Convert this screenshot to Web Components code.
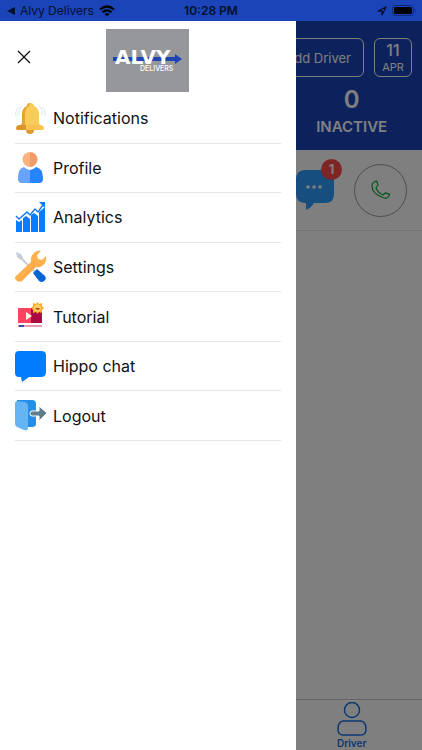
<!DOCTYPE html>
<html lang="en">
<head>
<meta charset="utf-8">
<meta name="viewport" content="width=device-width, initial-scale=1">
<title>Alvy Delivers</title>
<style>
  html, body {
    height: 100%;
    margin: 0;
  }

  body {
    background: #fff;
    color: #111;
    font-family: Inter, "Liberation Sans", sans-serif;
  }
</style>
</head>
<body>
<alvy-app></alvy-app>
<script>
const icons = {
  bell: `
    <path d="M4 4Q0 7 1 13M7 3Q3 6 4 12M27 4q4 3 3 9M24 3q4 3 3 9" fill="none" stroke="#dfe3e8"/>
    <circle cx="15" cy="27" r="4" fill="#e09a2b"/>
    <path d="M15 0q-3 0-3 3-5 2-5 9v8q0 2-3 3h23q-3-1-3-3v-8q0-7-5-9 0-3-4-3z" fill="#f9cb57"/>
    <path d="M15 0q-3 0-3 3-5 2-5 9v8q0 2-3 3h6V12q0-7 4-9z" fill="#e6a336"/>
    <path d="M4 22h22q3 1 3 3t-3 2H4q-3 0-3-2t3-3z" fill="#f8c251"/>
    <path d="M4 22h7v5H4q-3 0-3-2t3-3z" fill="#dc952c"/>`,
  profile: `
    <path d="M15 0a7.500 7.500 0 0 0 0 15z" fill="#fcb27c"/>
    <path d="M15 0a7.500 7.500 0 0 1 0 15z" fill="#f19b68"/>
    <path d="M15 18q-3 0-6-3-6 1-6 12 0 4 4 4h8z" fill="#66a4ff"/>
    <path d="M15 18q3 0 6-3 7 1 7 12 0 4-4 4h-9z" fill="#2684ff"/>`,
  analytics: `
    <path d="M1 18l3 2 3-2v12H1zM8 16l3-2 4 3v13H8zM16 13l3-2 4 3v16h-7zM24 10l6-5v25h-6z" fill="#0a7cff"/>
    <path d="M1 14l3 3 8-7 3 3 5-6 3 3 5-7" fill="none" stroke="#0a7cff" stroke-width="1.400"/>
    <path d="M24 0h6v6z" fill="#0a7cff"/>`,
  tools: `
    <path d="M1 1l5 2 2 4-2 2-4-3z" fill="#c5ced8"/>
    <path d="M6 7l14 14" stroke="#c5ced8" stroke-width="2"/>
    <path d="M18 22l4-4 8 7q2 3-1 5-2 2-5 0z" fill="#0863d5"/>
    <path d="M1 25L16 11Q15 3 22 0q2-1 4 0l-4 4 1 4 4 1 4-4q1 7-4 10-3 2-6 1L7 30q-3 2-6-1-2-2 0-4z" fill="#ffb04e"/>
    <path d="M18 10q0 3 2 4L6 28q-2 2-4 1" fill="none" stroke="#f5a23e"/>`,
  tutorial: `
    <path d="M3 7h13v15H3z" fill="#ff425f"/>
    <path d="M16 7h11v15H16z" fill="#ab0b40"/>
    <path d="M11 11l6 4-6 4z" fill="#fff0e5"/>
    <path d="M3 25h24" stroke="#dd315c"/>
    <path d="M4 25h5" stroke="#2952b8" stroke-width="2"/>
    <path d="M22.500 1l1.500 2 3-1v3l2 2-2 2v3l-3-1-1.500 2-1.500-2-3 1V9l-2-2 2-2V2l3 1z" fill="#ffab31"/>
    <circle cx="22.500" cy="7" r="3.500" fill="#ffd160"/>
    <path d="M20 7h5q-2 4-5 0" fill="#ba4325"/>`,
  chat: `<path d="M4 0h22q5 0 5 4v17q0 5-5 5H14l-7 5-1-5H4q-4 0-4-4V4q0-4 4-4z" fill="#007cff"/>`,
  logout: `
    <path d="M2 0h15q4 0 4 4v20q0 3-4 3h-5L2 5z" fill="#258fe7"/>
    <path d="M2 1l8 1q3 1 3 4v22q0 3-4 2l-7-3q-2-1-2-4V4q0-3 2-3z" fill="#65b5f5"/>
    <path d="M17 11h7V6l8 7-8 8v-5h-7q-2 0-2-2.500t2-2.500z" fill="#607d8b" stroke="#fff"/>`
};

class StatusBar extends HTMLElement {
  constructor() {
    super();
    this.attachShadow({ mode: 'open' });
    this.shadowRoot.innerHTML = `
      <style>
        :host {
          align-items: center;
          background: #1a44b8;
          color: #04102e;
          display: grid;
          font-size: 12px;
          grid-template-columns: 1fr auto 1fr;
          height: 21px;
          padding: 0 6px;
        }

        a {
          align-items: center;
          color: inherit;
          display: flex;
          gap: 5px;
          text-decoration: none;
        }

        time {
          font-weight: 600;
        }

        .power {
          align-items: center;
          display: flex;
          gap: 5px;
          justify-content: flex-end;
        }
      </style>
      <a href="#">
        <svg width="9" height="8" viewBox="0 0 9 8" aria-hidden="true"><path d="M1 4l8-4v8z" fill="currentColor"/></svg>
        <span>Alvy Delivers</span>
        <svg width="16" height="12" viewBox="0 0 16 12" fill="none" stroke="#000" stroke-width="2.200" aria-label="Wi-Fi"><path d="M1 4.500q7-6 14 0M3.500 7.300q4.500-4 9 0"/><path d="M5.500 9q2.500-2 5 0L8 11.500z" fill="#000" stroke="none"/></svg>
      </a>
      <time>10:28 PM</time>
      <div class="power">
        <svg width="10" height="10" viewBox="0 0 10 10" fill="none" stroke="#04102e" stroke-width="1.300" aria-label="Location"><path d="M1 5l8-4-4 8V5z" stroke-linejoin="round"/></svg>
        <svg width="24" height="11" viewBox="0 0 24 11" aria-label="Battery"><rect x=".500" y=".500" width="21" height="10" rx="3" fill="none" stroke="#0f2a75"/><rect x="2" y="2" width="18" height="7" rx="1.500"/><path d="M23 4q2 1.500 0 3z" fill="#0f2a75"/></svg>
      </div>
    `;
  }
}
customElements.define('status-bar', StatusBar);

class AlvyLogo extends HTMLElement {
  constructor() {
    super();
    this.attachShadow({ mode: 'open' });
    this.shadowRoot.innerHTML = `
      <style>
        :host {
          display: block;
        }

        svg {
          display: block;
        }

        text {
          fill: #fff;
        }

        .name {
          font-family: "DejaVu Sans", sans-serif;
          font-size: 20px;
          font-weight: 700;
        }

        .sub {
          font-family: Inter, "Liberation Sans", sans-serif;
          font-size: 7px;
          font-weight: 500;
        }
      </style>
      <svg width="83" height="63" viewBox="0 0 83 63" role="img" aria-label="Alvy Delivers">
        <path d="M0 0h83v63H0z" fill="#96979a"/>
        <path d="M7 28h62v-3l7 5-7 5v-3H7z" fill="#1f45b5"/>
        <text class="name" x="9" y="35">ALVY</text>
        <text class="sub" x="34" y="42">DELIVERS</text>
      </svg>
    `;
  }
}
customElements.define('alvy-logo', AlvyLogo);

class MenuItem extends HTMLElement {
  connectedCallback() {
    if (this.shadowRoot) return;
    this.attachShadow({ mode: 'open' });
    this.shadowRoot.innerHTML = `
      <style>
        :host {
          border-bottom: 1px solid #e6e6e6;
          display: grid;
        }

        a {
          align-items: center;
          color: #111;
          display: flex;
          font-size: 16px;
          gap: 7px;
          text-decoration: none;
        }

        svg {
          flex: none;
          overflow: visible;
        }
      </style>
      <a href="#">
        <svg width="31" height="31" viewBox="0 0 31 31" aria-hidden="true">${icons[this.getAttribute('icon')]}</svg>
        <slot></slot>
      </a>
    `;
  }
}
customElements.define('menu-item', MenuItem);

class SideMenu extends HTMLElement {
  constructor() {
    super();
    this.attachShadow({ mode: 'open' });
    this.shadowRoot.innerHTML = `
      <style>
        :host {
          background: #fff;
          display: block;
        }

        header {
          align-items: center;
          display: grid;
          grid-template-columns: 1fr auto 1fr;
          padding: 8px 19px 2px 17px;
        }

        button {
          background: none;
          border: 0;
          height: 14px;
          justify-self: start;
          margin-bottom: 8px;
          padding: 0;
        }

        button svg {
          display: block;
        }

        nav {
          display: grid;
          grid-auto-rows: 1fr;
          margin: 0 15px;
          min-height: 347px;
        }
      </style>
      <header>
        <button aria-label="Close menu">
          <svg width="14" height="14" viewBox="0 0 14 14" fill="none" stroke="#111" stroke-width="1.300"><path d="M1 1l12 12M13 1L1 13"/></svg>
        </button>
        <alvy-logo></alvy-logo>
      </header>
      <nav>
        <menu-item icon="bell">Notifications</menu-item>
        <menu-item icon="profile">Profile</menu-item>
        <menu-item icon="analytics">Analytics</menu-item>
        <menu-item icon="tools">Settings</menu-item>
        <menu-item icon="tutorial">Tutorial</menu-item>
        <menu-item icon="chat">Hippo chat</menu-item>
        <menu-item icon="logout">Logout</menu-item>
      </nav>
    `;
  }
}
customElements.define('side-menu', SideMenu);

class DriverBoard extends HTMLElement {
  constructor() {
    super();
    this.attachShadow({ mode: 'open' });
    this.shadowRoot.innerHTML = `
      <style>
        :host {
          background: #fff;
          display: flex;
          flex-direction: column;
        }

        header {
          background: #1a44b8;
          color: #fff;
          padding: 17px 10px 11px;
        }

        .actions {
          display: flex;
          gap: 10px;
          height: 39px;
          justify-content: flex-end;
        }

        button {
          background: none;
          border: 1px solid #fff;
          border-radius: 6px;
          color: inherit;
          font: inherit;
          padding: 0;
        }

        .add {
          font-size: 13px;
          padding: 0 12px;
        }

        .date {
          display: grid;
          align-content: center;
          font-size: 11px;
          line-height: 14px;
          width: 38px;
        }

        .date b {
          font-size: 16px;
          font-weight: 500;
          line-height: 19px;
        }

        .stats, footer {
          display: grid;
          grid-template-columns: repeat(3, 1fr);
          text-align: center;
        }

        .stats {
          margin: 8px -10px 0;
        }

        .stats div {
          grid-column: 3;
        }

        .stats b {
          display: block;
          font-size: 24px;
          font-weight: 600;
          line-height: 30px;
        }

        .stats span {
          display: block;
          font-size: 15px;
          font-weight: 600;
          line-height: 24px;
        }

        .contact {
          align-items: center;
          border-bottom: 1px solid #e2e2e2;
          display: flex;
          gap: 20px;
          height: 80px;
          justify-content: flex-end;
          padding-right: 15px;
        }

        .contact button {
          border: 0;
          position: relative;
        }

        .contact svg, footer svg {
          display: block;
        }

        .contact .call {
          border: 1px solid #9a9a9a;
          border-radius: 50%;
          box-sizing: border-box;
          display: grid;
          height: 53px;
          place-items: center;
          width: 53px;
        }

        .badge {
          background: #ff4a4a;
          border-radius: 50%;
          color: #fff;
          font-size: 13px;
          font-weight: 700;
          height: 21px;
          line-height: 21px;
          position: absolute;
          right: -8px;
          top: -11px;
          width: 21px;
        }

        footer {
          border-top: 1px solid #c8c8c8;
          margin-top: auto;
        }

        footer a {
          color: #1673e6;
          display: grid;
          font-size: 10px;
          font-weight: 600;
          grid-column: 3;
          justify-items: center;
          line-height: 14px;
          padding-top: 2px;
          text-decoration: none;
        }
      </style>
      <header>
        <div class="actions">
          <button class="add">Add Driver</button>
          <button class="date"><b>11</b>APR</button>
        </div>
        <div class="stats">
          <div><b>0</b><span>INACTIVE</span></div>
        </div>
      </header>
      <div class="contact">
        <button aria-label="Messages">
          <svg width="40" height="40" viewBox="0 0 40 40"><path d="M12 0h20q8 0 8 9v15q0 9-9 9H20q-3 5-8 7v-7Q2 33 2 24V9Q2 0 12 0z" fill="#2b9cff"/><g fill="#fff"><circle cx="14" cy="17" r="1.800"/><circle cx="20" cy="17" r="1.800"/><circle cx="26" cy="17" r="1.800"/></g></svg>
          <span class="badge">1</span>
        </button>
        <button class="call" aria-label="Call">
          <svg width="20" height="20" viewBox="0 0 20 20" fill="none" stroke="#1fae4d" stroke-width="1.300"><path d="M2 3l3-2q1 0 2 4L5 8q2 5 7 7l2-2 4 1q1 0 0 2-2 3-5 2Q1 14 1 6q0-2 1-3z" stroke-linejoin="round"/></svg>
        </button>
      </div>
      <footer>
        <a href="#">
          <svg width="30" height="34" viewBox="0 0 30 34" fill="none" stroke="currentColor" stroke-width="1.500"><circle cx="15" cy="8" r="7.500"/><path d="M6 19h18q5 1 5 8 0 6-5 6H6q-5 0-5-6 0-7 5-8z"/></svg>
          Driver
        </a>
      </footer>
    `;
  }
}
customElements.define('driver-board', DriverBoard);

class AlvyApp extends HTMLElement {
  constructor() {
    super();
    this.attachShadow({ mode: 'open' });
    this.shadowRoot.innerHTML = `
      <style>
        :host {
          display: flex;
          flex-direction: column;
          min-height: 100vh;
        }

        main {
          display: grid;
          flex: 1;
          position: relative;
        }

        .shade {
          background: rgba(0, 0, 0, 0.5);
          inset: 0;
          position: absolute;
        }

        side-menu {
          bottom: 0;
          left: 0;
          position: absolute;
          top: 0;
          width: calc(70% + 1px);
        }
      </style>
      <status-bar></status-bar>
      <main>
        <driver-board></driver-board>
        <div class="shade"></div>
        <side-menu></side-menu>
      </main>
    `;
  }
}
customElements.define('alvy-app', AlvyApp);
</script>
</body>
</html>
